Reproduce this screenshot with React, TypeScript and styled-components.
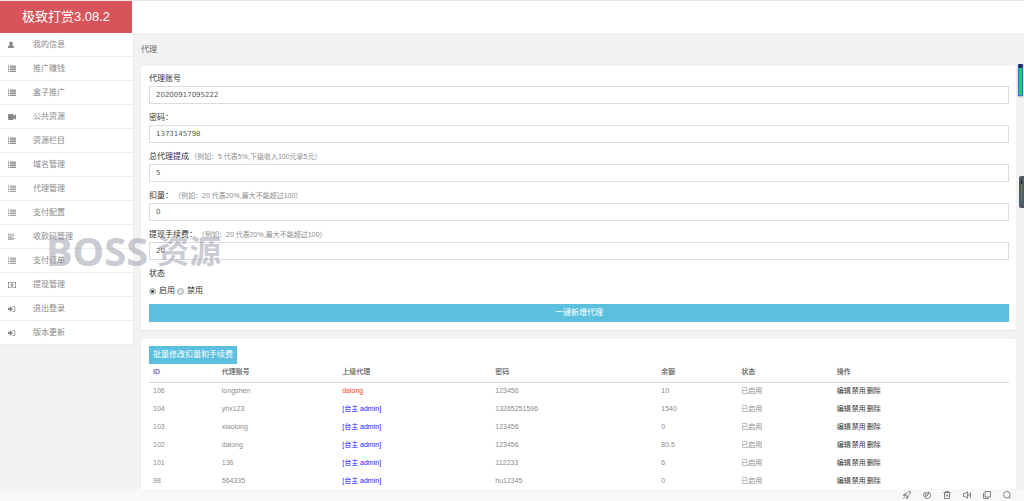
import React from "react";
import styled, { createGlobalStyle, css } from "styled-components";

const Global = createGlobalStyle`
  *, *::before, *::after { box-sizing: border-box; }
  body {
    margin: 0;
    background: #f2f2f2;
    color: #999;
    font-family: "Liberation Sans", "Noto Sans CJK SC", sans-serif;
    font-size: 8px;
    line-height: 12px;
  }
  button, input { font: inherit; }
  a { color: inherit; text-decoration: none; }
`;

const Shell = styled.div`
  display: grid;
  grid-template-rows: auto minmax(0, 1fr) auto;
  height: 100vh;
  overflow: hidden;
`;

const TopBar = styled.header`
  display: flex;
  height: 33px;
  background: #fff;
  border-top: 1px solid #e6e6e6;
`;

const Brand = styled.h1`
  width: 132px;
  margin: 0;
  background: #d9545a;
  color: #fff;
  font-size: 13px;
  font-weight: 400;
  line-height: 31px;
  text-align: center;
`;

const Body = styled.div`
  display: grid;
  grid-template-columns: 133px minmax(0, 1fr);
  align-items: start;
  min-height: 0;
  overflow: hidden;
`;

const SideNav = styled.nav`
  position: relative;
  background: #fff;
  box-shadow: 0 0 1px #ddd;
`;

const NavLink = styled.a`
  display: flex;
  align-items: center;
  gap: 17px;
  height: 24px;
  padding: 0 8px;
  border-bottom: 1px solid #eee;
  color: #888;
`;

const NavIcon = styled.svg<{ $soft?: boolean }>`
  width: 8px;
  height: 8px;
  fill: ${(p) => (p.$soft ? "#a4a4a4" : "#888")};
`;

const Watermark = styled.div`
  position: absolute;
  top: 198px;
  left: 46px;
  z-index: 2;
  display: flex;
  align-items: center;
  gap: 9px;
  color: rgba(150, 152, 168, 0.5);
  font-family: "Noto Sans", "Noto Sans CJK SC", sans-serif;
  font-size: 40px;
  font-weight: 700;
  line-height: 40px;
  white-space: nowrap;
  pointer-events: none;
`;

const WatermarkHan = styled.span`
  font-size: 32px;
`;

const Main = styled.main`
  display: flex;
  flex-direction: column;
  gap: 9px;
  padding: 0 8px;
`;

const Crumb = styled.h2`
  margin: 0;
  padding: 11px 0 1px;
  color: #666;
  font-size: 8px;
  font-weight: 400;
`;

const Card = styled.section`
  padding: 7px 7px 8px 8px;
  background: #fff;
  border-radius: 2px;
  box-shadow: 0 1px 1px rgba(0, 0, 0, 0.06);
`;

const Field = styled.div`
  display: flex;
  flex-direction: column;
  gap: 2px;
  margin-bottom: 8px;
`;

const labelText = css`
  color: #333;
  line-height: 11px;
  text-spacing-trim: space-all;
`;

const Label = styled.label`
  ${labelText}
`;

const Hint = styled.span`
  margin-left: 1px;
  color: #8c8c8c;
  font-size: 7px;
`;

const TextInput = styled.input`
  width: 100%;
  height: 18px;
  padding: 0 6px;
  border: 1px solid #ddd;
  border-radius: 0;
  background: #fff;
  color: #555;
  font-family: "DejaVu Sans", sans-serif;
  font-size: 7px;
`;

const Choices = styled.fieldset`
  margin: 0 0 7px;
  padding: 0;
  border: 0;
`;

const Legend = styled.legend`
  ${labelText}
  padding: 0;
  margin-bottom: 6px;
`;

const ChoiceRow = styled.div`
  display: flex;
  gap: 2px;
`;

const Choice = styled.label`
  display: flex;
  align-items: center;
  gap: 3px;
  color: #333;
`;

const Radio = styled.input`
  appearance: none;
  width: 7px;
  height: 7px;
  margin: 0;
  border: 1px solid #aaa;
  border-radius: 50%;
  background: #e4e4e4;
  &:checked {
    background: radial-gradient(circle, #444 0 1px, #e4e4e4 2px);
  }
`;

const Button = styled.button<{ $block?: boolean }>`
  display: block;
  width: ${(p) => (p.$block ? "100%" : "auto")};
  height: 18px;
  padding: 0 4px;
  border: 0;
  background: #5bc0de;
  color: #fff;
  line-height: 18px;
`;

const Table = styled.table`
  width: 100%;
  border-collapse: collapse;
  table-layout: fixed;
  font-size: 7px;
`;

const HeadCell = styled.th<{ $w?: string }>`
  width: ${(p) => p.$w ?? "auto"};
  height: 18px;
  padding: 0 4px 1px;
  border-bottom: 1px solid #d6d6d6;
  color: #777;
  font-weight: 700;
  text-align: left;
`;

const Cell = styled.td`
  height: 18px;
  padding: 0 4px;
  color: #8c8c8c;
`;

const Parent = styled.span<{ $agent?: boolean }>`
  color: ${(p) => (p.$agent ? "#ff3b1f" : "#2222ff")};
`;

const Actions = styled.div`
  display: flex;
  gap: 1px;
  color: #333;
`;

const StatusBar = styled.footer`
  display: flex;
  align-items: center;
  justify-content: flex-end;
  gap: 12px;
  height: 12px;
  padding: 0 13px;
  background: #f8f8f8;
`;

const ToolButton = styled.button`
  display: flex;
  padding: 0;
  border: 0;
  background: none;
`;

const ToolIcon = styled.svg`
  width: 8px;
  height: 8px;
  overflow: visible;
  fill: none;
  stroke: #777;
  stroke-width: 0.9;
`;

const EdgeMeter = styled.div`
  position: fixed;
  top: 64px;
  right: 1px;
  width: 5px;
  height: 32px;
  border: 1px solid #2b78b8;
  border-top: 4px solid #20304c;
  border-radius: 1px;
  background: #20d050;
  box-shadow: 0 1px 2px rgba(0, 0, 0, 0.3);
`;

const EdgeHandle = styled.div`
  position: fixed;
  top: 176px;
  right: 0;
  width: 5px;
  height: 32px;
  padding: 4px 2px;
  border-radius: 2px 0 0 2px;
  background: #505860;
  &::before {
    content: "";
    display: block;
    width: 1px;
    height: 24px;
    background: linear-gradient(#222 0 4px, #8a8040 5px, #3a7890);
  }
`;

type IconName = "user" | "list" | "video" | "qr" | "money" | "signin";

const shapes: Record<IconName, React.ReactNode> = {
  user: <path d="M3 0.500a1.800 1.800 0 0 1 1.800 1.800c0 .9-.4 1.600-.8 1.900C5.500 4.300 6 5 6 6c0 .6-.3 1-1 1H1C.3 7 0 6.600 0 6c0-1 .5-1.700 2-1.800-.4-.3-.8-1-.8-1.900A1.800 1.800 0 0 1 3 .5z" />,
  list: <path d="M0 .5h1.200v1.200H0zM2 .5h6v1.200H2zM0 2.300h1.200v1.200H0zM2 2.300h6v1.200H2zM0 4.100h1.200v1.200H0zM2 4.100h6v1.200H2zM0 5.900h1.200v1.200H0zM2 5.900h6v1.200H2z" />,
  video: <path d="M1 1h3.700a1 1 0 0 1 1 1v1L8 1.200v5.600L5.700 5v1a1 1 0 0 1-1 1H1a1 1 0 0 1-1-1V2a1 1 0 0 1 1-1z" />,
  qr: <path fillRule="evenodd" d="M0 .8h2.800v2.800H0zM.8 1.600v1.200H2V1.600zM3.300.8h2.800v2.800H3.300zM4.100 1.600v1.200h1.200V1.600zM0 4.100h2.800v2.800H0zM.8 4.900v1.200H2V4.900zM3.300 4.100h1.200v.8h1.600v1.400h-.8v.6h-.8v-.8h-.4v.8h-.8z" />,
  money: <path fillRule="evenodd" d="M0 1h8v6H0zM.7 2.500v3l1 .9h4.600l1-.9v-3l-1-.9H1.700zM4 2.200c1 0 1.400.8 1.400 1.800S5 5.800 4 5.800 2.600 5 2.600 4 3 2.200 4 2.200zM3.700 3v2h.7V3z" />,
  signin: <path fillRule="evenodd" d="M0 2.700h2V1l3 3-3 3V5.300H0zM4.500 1H6a1.300 1.300 0 0 1 1.300 1.300v3.400A1.300 1.300 0 0 1 6 7H4.500v-.8H6c.3 0 .5-.2.5-.5V2.300c0-.3-.2-.5-.5-.5H4.500z" />,
};

const nav: { text: string; icon: IconName; soft?: boolean }[] = [
  { text: "我的信息", icon: "user" },
  { text: "推广赚钱", icon: "list" },
  { text: "盒子推广", icon: "list" },
  { text: "公共资源", icon: "video" },
  { text: "资源栏目", icon: "list" },
  { text: "域名管理", icon: "list" },
  { text: "代理管理", icon: "list", soft: true },
  { text: "支付配置", icon: "list", soft: true },
  { text: "收款码管理", icon: "qr", soft: true },
  { text: "支付订单", icon: "list", soft: true },
  { text: "提现管理", icon: "money" },
  { text: "退出登录", icon: "signin" },
  { text: "版本更新", icon: "signin" },
];

const fields = [
  { id: "account", label: "代理账号", hint: "", value: "20200917095222" },
  { id: "password", label: "密码：", hint: "", value: "1373145798" },
  { id: "share", label: "总代理提成", hint: "（例如：5 代表5%,下级收入100元拿5元）", value: "5" },
  { id: "deduct", label: "扣量：", hint: "（例如：20 代表20%,最大不能超过100）", value: "0" },
  { id: "fee", label: "提现手续费：", hint: "（例如：20 代表20%,最大不能超过100）", value: "20" },
];

const columns = [
  { text: "ID", w: "8%" },
  { text: "代理账号", w: "14%" },
  { text: "上级代理", w: "17.8%" },
  { text: "密码", w: "19.3%" },
  { text: "余额", w: "9.3%" },
  { text: "状态", w: "11.1%" },
  { text: "操作" },
];

const agents = [
  { id: 106, name: "longshen", parent: "dalong", pass: "123456", balance: "10" },
  { id: 104, name: "yhx123", parent: "", pass: "13265251596", balance: "1540" },
  { id: 103, name: "xiaolong", parent: "", pass: "123456", balance: "0" },
  { id: 102, name: "dalong", parent: "", pass: "123456", balance: "80.5" },
  { id: 101, name: "136", parent: "", pass: "112233", balance: "6" },
  { id: 98, name: "564335", parent: "", pass: "hu12345", balance: "0" },
];

const tools: { name: string; shape: React.ReactNode }[] = [
  { name: "加速", shape: <path d="M7.500.5C5 .7 3.500 2 2.500 4L4 5.500C6 4.500 7.300 3 7.500.5zM3 3H1L.5 4.500h2M5 5v2L3.500 7.500v-2M2 5.500L.5 7.500" /> },
  { name: "浏览模式", shape: <path d="M2 1.200a3.500 3.500 0 1 0 4-.2M2 1.200V3M2.500 5.500c0-3 1-4 3-4.500 0 2.500-.5 4-3 4.500zM4 3.500h1.500" /> },
  { name: "清理", shape: <path d="M.5 1.500h7M2.500 1.500v-1h3v1M1.500 1.500v6h5v-6M3.300 3.500v2M4.700 3.500v2" /> },
  { name: "声音", shape: <path d="M.5 2.500h1.500L4.500.7v6.600L2 5.500H.5zM6 2.500v3M7.500 1v6" /> },
  { name: "窗口", shape: <path d="M2 .5h5.500v5.500H2zM.5 2v5.500h5.500" /> },
  { name: "搜索", shape: <path d="M3.800.5a3.200 3.200 0 1 0 0 6.500 3.200 3.200 0 0 0 0-6.500zM6 6l1.500 1.500" /> },
];

export default function App() {
  return (
    <>
      <Global />
      <Shell lang="zh-CN">
        <TopBar>
          <Brand>极致打赏3.08.2</Brand>
        </TopBar>
        <Body>
          <SideNav>
            {nav.map((item) => (
              <NavLink href="#" key={item.text}>
                <NavIcon viewBox="0 0 8 8" $soft={item.soft} aria-hidden="true">
                  {shapes[item.icon]}
                </NavIcon>
                {item.text}
              </NavLink>
            ))}
            <Watermark>
              BOSS <WatermarkHan>资源</WatermarkHan>
            </Watermark>
          </SideNav>
          <Main>
            <Crumb>代理</Crumb>
            <Card>
              {fields.map((f) => (
                <Field key={f.id}>
                  <Label htmlFor={f.id}>
                    {f.label}
                    <Hint>{f.hint}</Hint>
                  </Label>
                  <TextInput id={f.id} defaultValue={f.value} />
                </Field>
              ))}
              <Choices>
                <Legend>状态</Legend>
                <ChoiceRow>
                  <Choice>
                    <Radio type="radio" name="status" defaultChecked />
                    启用
                  </Choice>
                  <Choice>
                    <Radio type="radio" name="status" />
                    禁用
                  </Choice>
                </ChoiceRow>
              </Choices>
              <Button $block>一键新增代理</Button>
            </Card>
            <Card>
              <Button>批量修改扣量和手续费</Button>
              <Table>
                <thead>
                  <tr>
                    {columns.map((c) => (
                      <HeadCell key={c.text} $w={c.w}>{c.text}</HeadCell>
                    ))}
                  </tr>
                </thead>
                <tbody>
                  {agents.map((a) => (
                    <tr key={a.id}>
                      <Cell>{a.id}</Cell>
                      <Cell>{a.name}</Cell>
                      <Cell>
                        <Parent $agent={a.parent !== ""}>{a.parent || "[台主 admin]"}</Parent>
                      </Cell>
                      <Cell>{a.pass}</Cell>
                      <Cell>{a.balance}</Cell>
                      <Cell>已启用</Cell>
                      <Cell>
                        <Actions>
                          <a href="#">编辑</a>
                          <a href="#">禁用</a>
                          <a href="#">删除</a>
                        </Actions>
                      </Cell>
                    </tr>
                  ))}
                </tbody>
              </Table>
            </Card>
          </Main>
        </Body>
        <StatusBar>
          {tools.map((t) => (
            <ToolButton key={t.name} aria-label={t.name}>
              <ToolIcon viewBox="0 0 8 8" aria-hidden="true">{t.shape}</ToolIcon>
            </ToolButton>
          ))}
        </StatusBar>
      </Shell>
      <EdgeMeter />
      <EdgeHandle />
    </>
  );
}
